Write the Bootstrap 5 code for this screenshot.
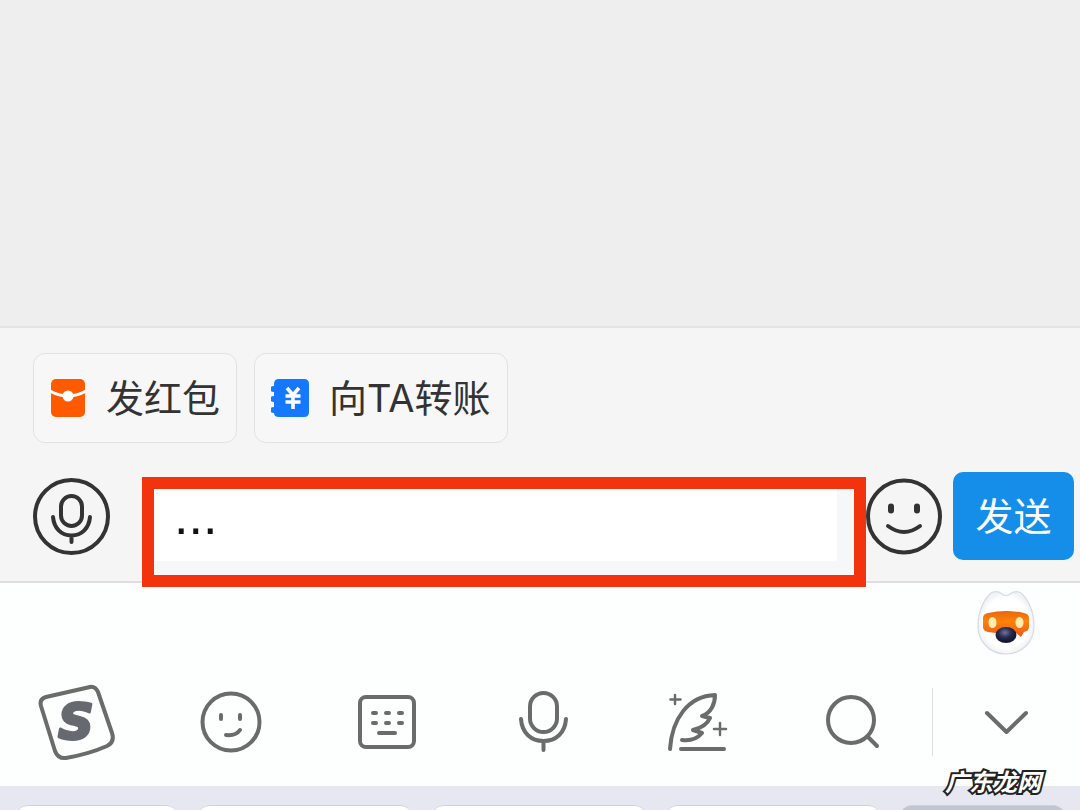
<!DOCTYPE html>
<html lang="zh-CN">
<head>
<meta charset="utf-8">
<meta name="viewport" content="width=device-width, initial-scale=1">
<title>聊天</title>
<link href="https://cdn.jsdelivr.net/npm/bootstrap@5.3.0/dist/css/bootstrap.min.css" rel="stylesheet">
<style>
  body { font-family: "Noto Sans CJK SC", sans-serif; background: #eee; color: #333; }
  svg { display: block; flex: none; }
  .composer { background: #f5f5f5; border-top: 2px solid #e3e3e3; border-bottom: 2px solid #dedede; padding: 25px 6px 21px 33px; }
  .chips { gap: 17px; }
  .chip { height: 90px; border: 1px solid #e2e2e2; border-radius: 12px; background: #f7f7f7; color: #333; font: 38px/56px Inter, "Noto Sans CJK SC", sans-serif; padding: 0 16px; gap: 20px; }
  .entry-row { margin-top: 29px; }
  .round-btn { margin-top: 6px; }
  .message { height: 110px; margin: 5px 0 -27px 32px; border: 12px solid #f2330d; background: #fff; box-shadow: inset -17px -14px 0 #f6f7f8; font: 52px/54px "Liberation Sans", sans-serif; color: #111; padding: 0 20px 32px; min-width: 0; outline: 0; z-index: 1; }
  .send { flex: none; height: 88px; width: 121px; margin-left: 11px; border-radius: 10px; background: #148ee8; color: #fff; font-size: 38px; line-height: 56px; }
  .send span { display: block; margin-bottom: 4px; }
  .panel { background: #fdfefe; }
  .assist { height: 75px; padding: 4px 42px 0 0; }
  .tools { display: grid; grid-template-columns: 154fr 154fr 157fr 155fr 155fr 157fr 148fr; height: 128px; }
  .tools svg, .round-btn svg { fill: none; stroke: #6b6b6b; stroke-width: 4; stroke-linecap: round; stroke-linejoin: round; }
  .round-btn svg { stroke: #333; }
  .divided { background: linear-gradient(#ddd, #ddd) left center / 1px 68px no-repeat; }
  .keys { display: grid; grid-template-columns: 162fr 214fr 214fr 214fr 165fr; column-gap: 20px; height: 24px; padding: 19px 15px 0 16px; background: #e6e7f0; overflow: hidden; }
  .key { height: 60px; border-radius: 12px; background: #fff; border-top: 1px solid #d0d1d8; }
  .key-dark { background: #bfc5d3; }
  .site-mark { right: 39px; bottom: 12px; font-size: 24px; line-height: 34px; font-weight: 700; font-style: italic; color: #fff; -webkit-text-stroke: 4px #222; paint-order: stroke fill; }
</style>
</head>
<body>
<div class="min-vh-100 d-flex flex-column position-relative overflow-hidden">
  <main class="flex-grow-1"></main>

  <form class="composer" onsubmit="return false">
    <div class="chips d-flex">
      <button type="button" class="chip d-flex align-items-center">
        <svg width="36" height="38" viewBox="0 0 36 38"><rect x="1" width="34" height="38" rx="5" fill="#ff5a00"/><path d="M0 12Q9 17 18 17T36 12" fill="none" stroke="#fff" stroke-width="3"/><circle cx="18" cy="17" r="5.5" fill="#fff"/></svg>
        <span>发红包</span>
      </button>
      <button type="button" class="chip d-flex align-items-center">
        <svg width="38" height="38" viewBox="0 0 38 38"><path d="M8 0h25q5 0 5 5v28q0 5-5 5H8q-5 0-5-4-4 0-4-3t4-3v-5q-4 0-4-3t4-3v-4q-4 0-4-3t4-3V5q0-5 5-5Z" fill="#1677ff"/><path d="M16 9l6 7 6-7M22 16v14M14.500 17h15M14.500 23h15" fill="none" stroke="#fff" stroke-width="3.600"/></svg>
        <span>向TA转账</span>
      </button>
    </div>
    <div class="entry-row d-flex align-items-start">
      <button type="button" class="round-btn btn p-0 border-0" aria-label="语音">
        <svg width="77" height="77" viewBox="0 0 77 77"><circle cx="38.500" cy="38.500" r="36.500"/><rect x="28" y="18" width="21" height="30" rx="10.500"/><path d="M20 39c1 11 8 18.500 18.500 18.500S56 50 57 39M38.500 58v6"/></svg>
      </button>
      <input type="text" class="message flex-grow-1 position-relative rounded-0" value="..." aria-label="消息">
      <button type="button" class="round-btn btn p-0 border-0" aria-label="表情">
        <svg width="76" height="77" viewBox="0 0 76 77"><circle cx="38" cy="38.500" r="36"/><path d="M25 28.500v4M51 28.500v4" stroke-width="6"/><path d="M22 48q16 12 32 0"/></svg>
      </button>
      <button type="submit" class="send btn p-0 border-0"><span>发送</span></button>
    </div>
  </form>

  <section class="panel">
    <div class="assist d-flex justify-content-end">
      <button type="button" class="btn p-0 border-0" aria-label="助手">
        <svg width="64" height="71" viewBox="0 0 64 71">
          <defs>
            <radialGradient id="face"><stop offset=".8" stop-color="#fff"/><stop offset="1" stop-color="#f0f2f6"/></radialGradient>
            <radialGradient id="nose" cx=".45" cy=".35"><stop stop-color="#71749a"/><stop offset=".6" stop-color="#292d52"/><stop offset="1" stop-color="#171a35"/></radialGradient>
            <linearGradient id="visor" x2="0" y2="1"><stop stop-color="#e8660c"/><stop offset=".4" stop-color="#ff8208"/><stop offset="1" stop-color="#ee551b"/></linearGradient>
          </defs>
          <path d="M17 6q6-3 11 1 4 3 8 0 5-4 11-1c8 7 13 20 13 33 0 16-12 28-28 28S4 55 4 39C4 26 9 13 17 6Z" fill="url(#face)" stroke="#d8dae0" stroke-width="1.200"/>
          <path d="M14 26q18-4 36 0 5 1 5 5v9q0 4-5 5l-3 5-5-4q-11 2-28-1-5-1-5-5v-9q0-4 5-5Z" fill="url(#visor)"/>
          <ellipse cx="18.500" cy="35.500" rx="4" ry="5.500" fill="#ffedb0"/><ellipse cx="45.500" cy="35.500" rx="4" ry="5.500" fill="#ffedb0"/>
          <ellipse cx="32" cy="48" rx="10.500" ry="8" fill="url(#nose)"/>
        </svg>
      </button>
    </div>
    <div class="tools">
      <button type="button" class="btn border-0 rounded-0 p-0 d-flex align-items-center justify-content-center" aria-label="搜狗输入法">
        <svg width="80" height="80" viewBox="0 0 80 80"><path d="M9 15L53 5q5-1 8 5l14 41q3 9-5 13-18 8-41 12-8 1-11-7L4 24q-2-7 5-9Z"/><text x="39" y="57" text-anchor="middle" font-family="DejaVu Sans" font-size="49" font-weight="700" font-style="italic" fill="#666a70" stroke="#666a70" stroke-width="3">S</text></svg>
      </button>
      <button type="button" class="btn border-0 rounded-0 p-0 d-flex align-items-center justify-content-center" aria-label="表情">
        <svg width="62" height="62" viewBox="0 0 62 62"><circle cx="31" cy="31" r="28.500"/><path d="M21 24v4M40 24v4M26 44q10 1 14-5"/></svg>
      </button>
      <button type="button" class="btn border-0 rounded-0 p-0 d-flex align-items-center justify-content-center" aria-label="键盘">
        <svg width="58" height="56" viewBox="0 0 58 56"><rect x="2" y="3" width="54" height="50" rx="6"/><path d="M15 19h3M28 19h3M41 19h3M15 29h3M28 29h3M41 29h3M21 39h16"/></svg>
      </button>
      <button type="button" class="btn border-0 rounded-0 p-0 d-flex align-items-center justify-content-center" aria-label="语音输入">
        <svg width="50" height="64" viewBox="0 0 50 64"><rect x="12" y="3" width="27" height="39" rx="13.500"/><path d="M3 29c1 14 10 22 22.500 22S47 43 48 29M25.500 51v9"/></svg>
      </button>
      <button type="button" class="btn border-0 rounded-0 p-0 d-flex align-items-center justify-content-center" aria-label="写作">
        <svg width="62" height="62" viewBox="0 0 62 62"><path d="M3 58C5 28 21 5 48 4c0 9-4 18-13 21l8 2c-3 7-9 10-17 12l9 3c-5 6-12 8-20 7M14 58h43"/><path d="M8 4v9M3.500 8.500h10M53 32v12M47 38h12" stroke-width="2.500"/></svg>
      </button>
      <button type="button" class="btn border-0 rounded-0 p-0 d-flex align-items-center justify-content-center" aria-label="搜索">
        <svg width="56" height="60" viewBox="0 0 56 60"><circle cx="25" cy="28" r="23"/><path d="M42 45l9 9"/></svg>
      </button>
      <button type="button" class="divided btn border-0 rounded-0 p-0 d-flex align-items-center justify-content-center" aria-label="收起">
        <svg width="44" height="28" viewBox="0 0 44 28"><path d="M3 5l19.500 19L42 5"/></svg>
      </button>
    </div>
  </section>

  <div class="keys">
    <div class="key"></div><div class="key"></div><div class="key"></div><div class="key"></div><div class="key key-dark"></div>
  </div>
  <div class="site-mark position-absolute">广东龙网</div>
</div>
<script src="https://cdn.jsdelivr.net/npm/bootstrap@5.3.0/dist/js/bootstrap.bundle.min.js"></script>
</body>
</html>
